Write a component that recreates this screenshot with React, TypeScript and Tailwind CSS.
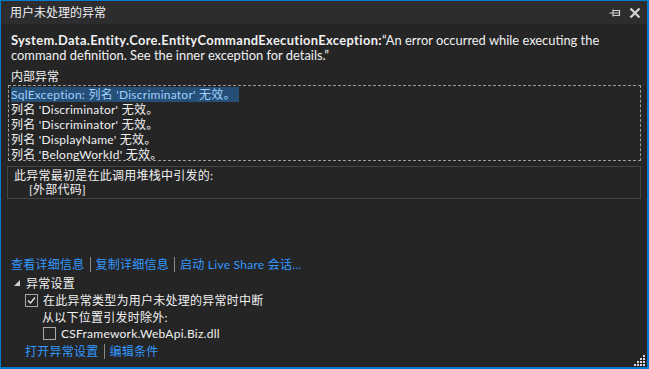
import React from "react";

const font = { fontFamily: '"Lato", "Noto Sans CJK SC", sans-serif' };

function Check({ checked }: { checked: boolean }) {
  return (
    <span className="inline-flex w-[13px] h-[13px] border border-[#a8a8a8] items-center justify-center shrink-0">
      {checked && (
        <svg width="11" height="11" viewBox="0 0 11 11">
          <path d="M2 5.5 L4.5 8 L9 2.5" stroke="#e8e8e8" strokeWidth="1.3" fill="none" />
        </svg>
      )}
    </span>
  );
}

function Sep() {
  return <span className="inline-block w-px h-[15px] bg-[#8a8a8a] mx-[5px]" />;
}

export default function App() {
  return (
    <div
      className="w-[649px] h-[369px] bg-[#252526] border-t-[1px] border-l-[1px] border-r-[2px] border-b-[2px] border-[#007acc] flex flex-col text-[12px] tracking-[0.25px] text-[#f1f1f1] overflow-hidden"
      style={font}
    >
      <div className="h-[23px] bg-[#2d2d30] flex items-center pl-[9px] pr-[4px] shrink-0">
        <span className="flex-1 text-[#f1f1f1] tracking-normal">用户未处理的异常</span>
        <svg width="12" height="10" viewBox="0 0 12 10" className="mr-[8px]">
          <path d="M0.5 5 H4 M4 1.5 V8.5 M4 2.5 H10.5 V7.5 H4 M4 5 H10.5" stroke="#d0d0d0" strokeWidth="1.2" fill="none" />
        </svg>
        <svg width="12" height="12" viewBox="0 0 12 12" className="mr-[2px]">
          <path d="M1.5 1.5 L10.5 10.5 M10.5 1.5 L1.5 10.5" stroke="#d0d0d0" strokeWidth="2.4" fill="none" />
        </svg>
      </div>
      <div className="flex flex-col flex-1 pl-[10px] pr-[6px]">
        <p className="mt-[9px] leading-[15px] text-[12.9px] tracking-normal pr-[30px]">
          <b className="font-bold tracking-[0.35px]">System.Data.Entity.Core.EntityCommandExecutionException:</b>“An error occurred while executing the command definition. See the inner exception for details.”
        </p>
        <div className="mt-[6px] leading-[15px] tracking-normal">内部异常</div>
        <div className="-ml-[3px] mt-[1px] border border-dashed border-[#9c9c9c] h-[76px] pl-[2px] pt-[1px] flex flex-col leading-[15px]">
          <div>
            <span className="bg-[#264f78] text-[#9fd0ff] pr-[3px]">SqlException: 列名 'Discriminator' 无效。</span>
          </div>
          <div>列名 'Discriminator' 无效。</div>
          <div>列名 'Discriminator' 无效。</div>
          <div>列名 'DisplayName' 无效。</div>
          <div>列名 'BelongWorkId' 无效。</div>
        </div>
        <div className="-ml-[4px] mt-[5px] border border-[#434346] h-[33px] pl-[6px] pt-[2px] flex flex-col leading-[14px]">
          <div>此异常最初是在此调用堆栈中引发的:</div>
          <div className="pl-[15px]">[外部代码]</div>
        </div>
        <div className="flex-1" />
        <div className="flex items-center text-[#3399ff] leading-[15px] h-[16px]">
          <span>查看详细信息</span>
          <Sep />
          <span>复制详细信息</span>
          <Sep />
          <span>启动 Live Share 会话...</span>
        </div>
        <div className="mt-[3px] flex items-center h-[16px] leading-[15px]">
          <svg width="8" height="8" viewBox="0 0 8 8" className="mr-[5px] ml-[2px]">
            <path d="M7 1 L7 7 L1 7 Z" fill="#d0d0d0" />
          </svg>
          <span>异常设置</span>
        </div>
        <div className="mt-[1px] flex items-center h-[16px] pl-[14px] leading-[15px]">
          <Check checked />
          <span className="ml-[5px]">在此异常类型为用户未处理的异常时中断</span>
        </div>
        <div className="mt-[1px] h-[16px] pl-[31px] leading-[15px] flex items-center">从以下位置引发时除外:</div>
        <div className="mt-[0px] flex items-center h-[16px] pl-[32px] leading-[15px]">
          <Check checked={false} />
          <span className="ml-[5px]">CSFramework.WebApi.Biz.dll</span>
        </div>
        <div className="mt-[2px] mb-[8px] flex items-center text-[#3399ff] h-[16px] pl-[14px] leading-[15px]">
          <span>打开异常设置</span>
          <Sep />
          <span>编辑条件</span>
        </div>
      </div>
      <div className="relative">
        <svg width="11" height="11" viewBox="0 0 11 11" className="absolute right-[2px] bottom-[1px]">
          {[
            [9, 0], [6, 3], [9, 3], [3, 6], [6, 6], [9, 6], [0, 9], [3, 9], [6, 9], [9, 9],
          ].map(([x, y], i) => (
            <rect key={i} x={x} y={y} width="2" height="2" fill="#d8d8e8" />
          ))}
        </svg>
      </div>
    </div>
  );
}
